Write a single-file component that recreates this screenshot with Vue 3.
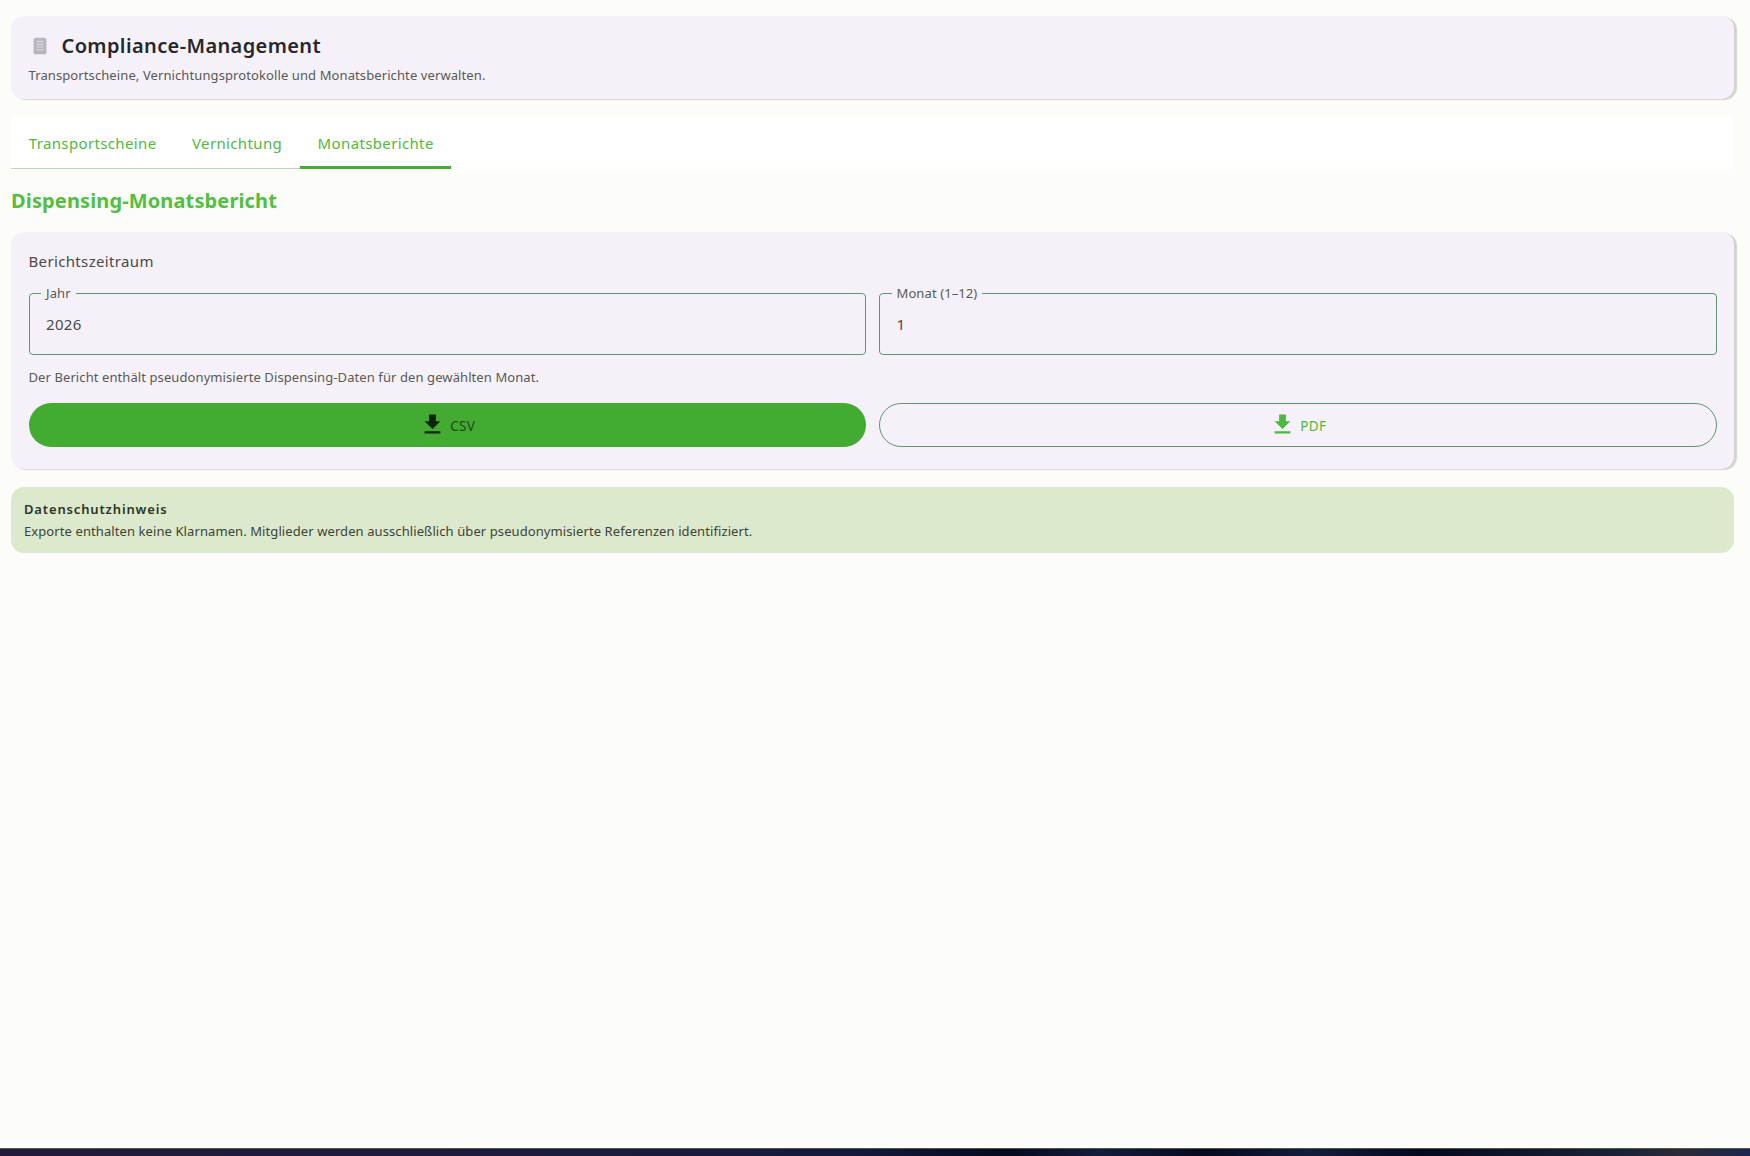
<script setup>
const tabs = [
  { label: 'Transportscheine', active: false },
  { label: 'Vernichtung', active: false },
  { label: 'Monatsberichte', active: true },
]
const fields = [
  { label: 'Jahr', value: '2026' },
  { label: 'Monat (1–12)', value: '1' },
]
</script>

<template>
  <div class="page">
    <main class="main">
      <section class="card header-card">
        <div class="title-row">
          <svg class="title-icon" viewBox="0 0 24 24" aria-hidden="true">
            <rect x="5" y="3" width="14" height="18" rx="2" fill="#b9b4bc" />
            <path d="M8 7h8M8 10h8M8 13h8M8 16h8" stroke="#e6e1e8" stroke-width="1" fill="none" />
          </svg>
          <h1 class="title">Compliance-Management</h1>
        </div>
        <p class="subtitle">Transportscheine, Vernichtungsprotokolle und Monatsberichte verwalten.</p>
      </section>

      <nav class="tabs">
        <div v-for="t in tabs" :key="t.label" class="tab" :class="{ active: t.active }">{{ t.label }}</div>
        <div class="tabs-fill"></div>
      </nav>

      <h2 class="section-title">Dispensing-Monatsbericht</h2>

      <section class="card report-card">
        <div class="card-title">Berichtszeitraum</div>
        <div class="grid">
          <fieldset v-for="f in fields" :key="f.label" class="field">
            <legend>{{ f.label }}</legend>
            <span class="value">{{ f.value }}</span>
          </fieldset>
        </div>
        <p class="hint">Der Bericht enthält pseudonymisierte Dispensing-Daten für den gewählten Monat.</p>
        <div class="grid">
          <button class="btn primary" type="button">
            <svg viewBox="0 0 24 24" aria-hidden="true"><path d="M5 20h14v-2H5v2zM19 9h-4V3H9v6H5l7 7 7-7z" /></svg>
            <span>CSV</span>
          </button>
          <button class="btn outline" type="button">
            <svg viewBox="0 0 24 24" aria-hidden="true"><path d="M5 20h14v-2H5v2zM19 9h-4V3H9v6H5l7 7 7-7z" /></svg>
            <span>PDF</span>
          </button>
        </div>
      </section>

      <section class="notice">
        <div class="notice-title">Datenschutzhinweis</div>
        <div class="notice-text">Exporte enthalten keine Klarnamen. Mitglieder werden ausschließlich über pseudonymisierte Referenzen identifiziert.</div>
      </section>
    </main>
    <div class="strip"></div>
  </div>
</template>

<style>
html, body { margin: 0; background: #fcfdf8; }
</style>

<style scoped>
.page {
  height: 1156px;
  display: flex;
  flex-direction: column;
  background: #fcfdf8;
  font-family: "Noto Sans", sans-serif;
  color: #1a1c18;
  overflow: hidden;
}
.main {
  flex: 1;
  padding: 16px 16px 0 11px;
  display: flex;
  flex-direction: column;
}
.card {
  background: #f6f1f9;
  border-radius: 13px;
  box-shadow: 2.5px 1px 1px rgba(0, 0, 0, 0.16);
}
.header-card {
  height: 83px;
  box-sizing: border-box;
  padding: 15px 17.5px 0;
}
.title-row {
  display: flex;
  align-items: center;
  gap: 11px;
  height: 30px;
}
.title-icon { width: 22px; height: 22px; flex: none; }
.title {
  margin: 0;
  font-size: 20px;
  font-weight: 600;
  letter-spacing: 0.38px;
  line-height: 30px;
  color: #25272a;
}
.subtitle {
  margin: 3.5px 0 0;
  font-size: 13px;
  letter-spacing: 0.1px;
  line-height: 20px;
  color: #565955;
}
.tabs {
  margin-top: 17px;
  display: flex;
  background: #fff;
  height: 53px;
}
.tab {
  padding: 0 17.75px;
  height: 53px;
  box-sizing: border-box;
  line-height: 54px;
  font-size: 15px;
  font-weight: 400;
  letter-spacing: 0.36px;
  color: #4fb940;
  border-bottom: 1px solid #c4d2bd;
}
.tab.active {
  border-bottom: 3px solid #43ab32;
}
.tabs-fill { flex: 1; }
.section-title {
  margin: 17px 0 0;
  font-size: 20px;
  font-weight: 700;
  letter-spacing: 0.13px;
  line-height: 29px;
  color: #52bf42;
}
.report-card {
  margin-top: 17px;
  height: 237px;
  box-sizing: border-box;
  padding: 18px 17.5px 0;
}
.card-title {
  font-size: 15px;
  letter-spacing: 0.35px;
  line-height: 22px;
  color: #484b46;
}
.grid {
  display: grid;
  grid-template-columns: 1fr 1fr;
  gap: 13px;
}
.field {
  margin: 13px 0 0;
  padding: 0 16.5px;
  height: 70px;
  box-sizing: border-box;
  border: 1px solid #5f9570;
  border-radius: 4px;
  min-width: 0;
}
.field legend {
  padding: 0 5px;
  margin-left: -5px;
  font-size: 13px;
  letter-spacing: 0.1px;
  line-height: 17px;
  color: #565955;
}
.value {
  display: block;
  margin-top: 11px;
  font-size: 15px;
  letter-spacing: 0.3px;
  line-height: 22px;
  color: #484b46;
}
.hint {
  margin: 12px 0 0;
  font-size: 13px;
  letter-spacing: 0.09px;
  line-height: 20px;
  color: #565955;
}
.grid + .hint + .grid { margin-top: 16px; }
.btn {
  height: 44px;
  border-radius: 22px;
  display: flex;
  align-items: center;
  justify-content: center;
  gap: 4px;
  font-family: inherit;
  font-size: 13.5px;
  font-weight: 400;
  letter-spacing: 0.4px;
  padding: 0;
  box-sizing: border-box;
}
.btn svg { width: 27px; height: 27px; fill: currentColor; margin-top: -1px; }
.btn span { padding-top: 1px; }
.btn.primary { background: #43ab32; color: #10240c; border: none; }
.btn.outline { background: transparent; color: #4cb83c; border: 1px solid #5f9570; }
.btn.primary span { color: #1f4a18; }
.notice {
  margin-top: 18px;
  height: 66px;
  box-sizing: border-box;
  padding: 13px 13px 0;
  background: #dde9cc;
  border-radius: 13px;
  font-size: 13px;
  line-height: 18px;
  color: #3c4338;
}
.notice-title { font-weight: 600; letter-spacing: 0.85px; color: #2c3328; }
.notice-text { margin-top: 4.3px; letter-spacing: 0.09px; }
.strip {
  height: 8px;
  box-sizing: border-box;
  border-top: 1px solid #55574f;
  background: linear-gradient(90deg, #221a3a 0, #1c1a3c 500px, #141a3c 850px, #04091f 1010px, #141c3c 1100px, #04091f 1205px, #141c3c 1310px, #03081f 1420px, #1a2238 1620px, #2a2a38 1680px, #1a2550 1750px);
}
</style>
